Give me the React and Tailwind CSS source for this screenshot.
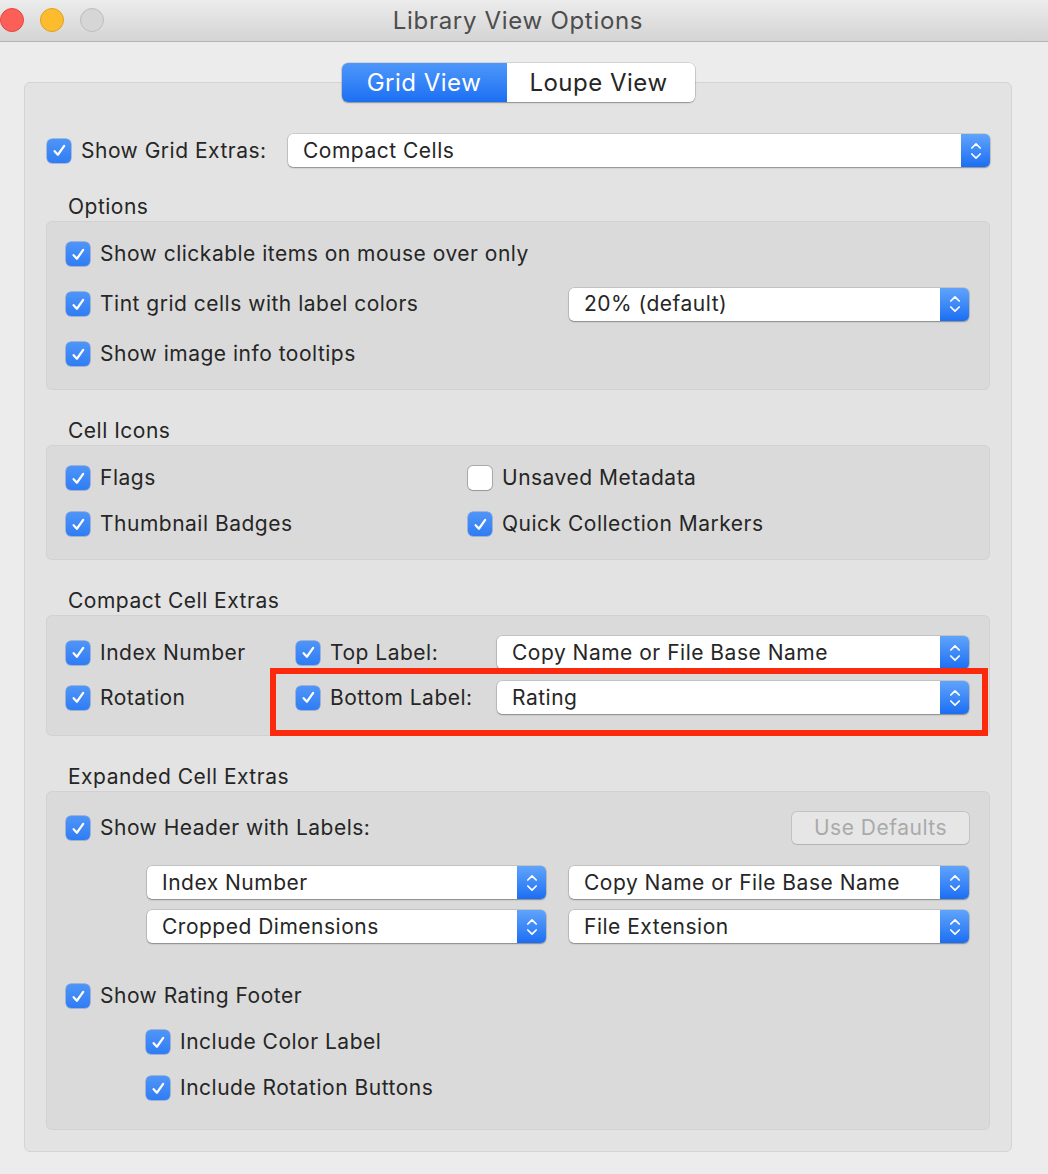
import React from 'react';

const font = { fontFamily: 'Inter, "Liberation Sans", sans-serif' };

const Check = ({ checked = true }) => (
  <div
    className={`w-[24px] h-[24px] rounded-[5px] shrink-0 flex items-center justify-center ${
      checked
        ? 'bg-gradient-to-b from-[#4f95f8] to-[#2f7cf4] shadow-[0_0_0_0.5px_rgba(30,90,200,0.6)]'
        : 'bg-white shadow-[0_0_0_1px_rgba(0,0,0,0.22),0_1px_1px_rgba(0,0,0,0.1)]'
    }`}
  >
    {checked && (
      <svg width="17" height="17" viewBox="0 0 16 16" fill="none">
        <path d="M3.4 8.6 L6.5 12 L12.4 3.6" stroke="white" strokeWidth="2.1" strokeLinecap="round" strokeLinejoin="round" />
      </svg>
    )}
  </div>
);

const CheckRow = ({ label, checked = true, className = '' }) => (
  <div className={`flex items-center gap-[10px] ${className}`}>
    <Check checked={checked} />
    <span className="text-[21px] text-[#262626] tracking-[0.5px]">{label}</span>
  </div>
);

const Select = ({ value, className = '' }) => (
  <div
    className={`h-[33px] flex items-stretch rounded-[5px] bg-white shadow-[0_0_0_0.5px_rgba(0,0,0,0.2),0_1px_1.5px_rgba(0,0,0,0.3)] overflow-hidden ${className}`}
  >
    <div className="flex-1 flex items-center pl-[15px] text-[21px] text-[#262626] tracking-[0.5px] truncate">{value}</div>
    <div className="w-[29px] bg-gradient-to-b from-[#5fa3fb] to-[#1a6ef3] flex items-center justify-center">
      <svg width="14" height="24" viewBox="0 0 14 24" fill="none">
        <path d="M2.8 9 L7 4.8 L11.2 9" stroke="white" strokeWidth="1.7" strokeLinecap="round" strokeLinejoin="round" />
        <path d="M2.8 15 L7 19.2 L11.2 15" stroke="white" strokeWidth="1.7" strokeLinecap="round" strokeLinejoin="round" />
      </svg>
    </div>
  </div>
);

const SectionLabel = ({ children }) => (
  <div className="h-[28px] leading-[28px] pl-[22px] text-[21px] text-[#262626] tracking-[0.5px]">{children}</div>
);

const Box = ({ children, className = '' }) => (
  <div className={`bg-[#dadada] rounded-[6px] shadow-[inset_0_0_0_1px_rgba(0,0,0,0.04)] ${className}`}>{children}</div>
);

export default function App() {
  return (
    <div className="w-[1048px] h-[1174px] bg-[#ececec] overflow-hidden" style={font}>
      {/* title bar */}
      <div className="relative h-[42px] bg-gradient-to-b from-[#ececec] to-[#d4d4d4] border-b border-[#b4b4b4] flex items-center justify-center pr-[12px] pt-[1px]">
        <div className="absolute left-0 top-[8px] flex gap-[16px]">
          <div className="w-[24px] h-[24px] rounded-full bg-[#fc5f57] border border-[#df4a42]" />
          <div className="w-[24px] h-[24px] rounded-full bg-[#fdbc2e] border border-[#dea124]" />
          <div className="w-[24px] h-[24px] rounded-full bg-[#d6d6d6] border border-[#bdbdbd]" />
        </div>
        <span className="text-[24px] text-[#4d4d4d] tracking-[0.7px]">Library View Options</span>
      </div>

      <div className="pl-[24px] pr-[36px] pt-[40px]">
        <div className="relative bg-[#e3e3e3] border border-[#d4d4d4] rounded-[6px] px-[21px] pb-[21px]">
          {/* tabs */}
          <div className="flex justify-center -mt-[20px]">
            <div className="flex h-[39px] rounded-[6px] shadow-[0_0_0_0.5px_rgba(0,0,0,0.2),0_1px_1.5px_rgba(0,0,0,0.3)] overflow-hidden">
              <div className="w-[165px] bg-gradient-to-b from-[#4d97fa] to-[#1b6ff3] text-white text-[24px] flex items-center justify-center tracking-[0.5px]">Grid View</div>
              <div className="w-[188px] bg-white text-[#262626] text-[24px] flex items-center justify-center tracking-[0.5px] pr-[4px]">Loupe View</div>
            </div>
          </div>

          {/* grid extras */}
          <div className="mt-[32px] flex items-center pl-[1px] gap-[10px]">
            <Check />
            <span className="text-[21px] text-[#262626] tracking-[0.5px] w-[197px]">Show Grid Extras:</span>
            <Select value="Compact Cells" className="flex-1" />
          </div>

          {/* Options */}
          <div className="mt-[26px]">
            <SectionLabel>Options</SectionLabel>
            <Box className="pt-[8px] pb-[11px] pl-[20px] pr-[21px]">
              <CheckRow label="Show clickable items on mouse over only" className="h-[50px]" />
              <div className="h-[50px] flex items-center justify-between">
                <CheckRow label="Tint grid cells with label colors" />
                <Select value="20% (default)" className="w-[400px]" />
              </div>
              <CheckRow label="Show image info tooltips" className="h-[50px]" />
            </Box>
          </div>

          {/* Cell Icons */}
          <div className="mt-[27px]">
            <SectionLabel>Cell Icons</SectionLabel>
            <Box className="pt-[10px] pb-[13px] pl-[20px] pr-[21px] grid grid-cols-[402px_1fr]">
              <CheckRow label="Flags" className="h-[46px]" />
              <CheckRow label="Unsaved Metadata" checked={false} className="h-[46px]" />
              <CheckRow label="Thumbnail Badges" className="h-[46px]" />
              <CheckRow label="Quick Collection Markers" className="h-[46px]" />
            </Box>
          </div>

          {/* Compact Cell Extras */}
          <div className="mt-[27px]">
            <SectionLabel>Compact Cell Extras</SectionLabel>
            <Box className="relative pt-[15px] pb-[16px] pl-[20px] pr-[21px] grid grid-cols-[230px_201px_1fr]">
              <CheckRow label="Index Number" className="h-[45px]" />
              <CheckRow label="Top Label:" className="h-[45px]" />
              <div className="h-[45px] flex items-center">
                <Select value="Copy Name or File Base Name" className="w-full" />
              </div>
              <CheckRow label="Rotation" className="h-[45px]" />
              <CheckRow label="Bottom Label:" className="h-[45px]" />
              <div className="h-[45px] flex items-center">
                <Select value="Rating" className="w-full" />
              </div>
              {/* annotation */}
              <div className="absolute left-[224px] top-[53px] w-[718px] h-[68px] border-[6px] border-[#fb2a0c]" />
            </Box>
          </div>

          {/* Expanded Cell Extras */}
          <div className="mt-[27px]">
            <SectionLabel>Expanded Cell Extras</SectionLabel>
            <Box className="pt-[21px] pb-[19px] pl-[20px] pr-[21px]">
              <div className="h-[32px] flex items-center justify-between">
                <CheckRow label="Show Header with Labels:" />
                <div className="w-[177px] h-[32px] rounded-[5px] bg-[#e6e6e6] shadow-[0_0_0_1px_rgba(0,0,0,0.1),0_1px_1px_rgba(0,0,0,0.08)] flex items-center justify-center text-[21px] text-[#aaaaaa] tracking-[0.5px]">
                  Use Defaults
                </div>
              </div>
              <div className="mt-[22px] pl-[81px] grid grid-cols-[399px_400px] gap-x-[23px] gap-y-[11px]">
                <Select value="Index Number" />
                <Select value="Copy Name or File Base Name" />
                <Select value="Cropped Dimensions" />
                <Select value="File Extension" />
              </div>
              <CheckRow label="Show Rating Footer" className="h-[46px] mt-[30px]" />
              <CheckRow label="Include Color Label" className="h-[46px] pl-[80px]" />
              <CheckRow label="Include Rotation Buttons" className="h-[46px] pl-[80px]" />
            </Box>
          </div>
        </div>
      </div>
    </div>
  );
}
